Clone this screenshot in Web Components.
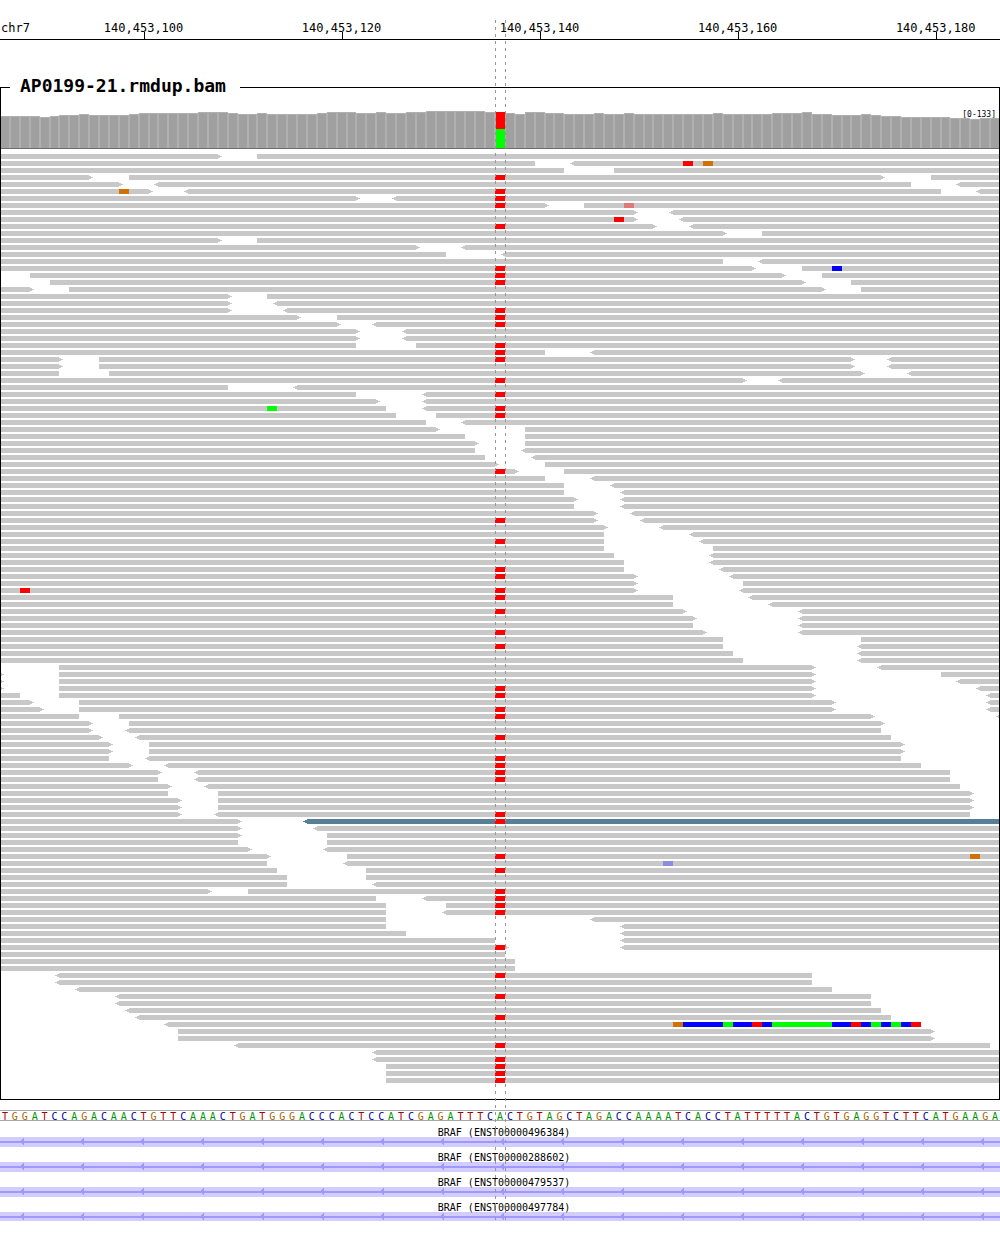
<!DOCTYPE html>
<html lang="en">
<head>
<meta charset="utf-8">
<title>AP0199-21.rmdup.bam chr7</title>
<style>
body { margin: 0; background: #fff; color: #000; font-family: "DejaVu Sans Mono", monospace; }
</style>
</head>
<body>
<genome-view>
  <genome-ruler chrom="chr7" first="140453086" step="20"></genome-ruler>
  <alignment-track>
    <span slot="title">AP0199-21.rmdup.bam</span>
    <coverage-plot slot="coverage" range="[0-133]"></coverage-plot>
    <read-pileup></read-pileup>
  </alignment-track>
  <base-sequence>TGGATCCAGACAACTGTTCAAACTGATGGGACCCACTCCATCGAGATTTCACTGTAGCTAGACCAAAATCACCTATTTTTACTGTGAGGTCTTCATGAAGA</base-sequence>
  <gene-list>
    <gene-track>BRAF (ENST00000496384)</gene-track>
    <gene-track>BRAF (ENST00000288602)</gene-track>
    <gene-track>BRAF (ENST00000479537)</gene-track>
    <gene-track>BRAF (ENST00000497784)</gene-track>
  </gene-list>
</genome-view>
<script>
const BASES = 101;
const pct = i => (i * 100 / BASES) + '%';
const rect = (from, to, y, h, fill) =>
  `<rect x="${pct(from)}" y="${y}" width="${pct(to - from)}" height="${h}" fill="${fill}"/>`;

/* One line per pileup row. "a-b" is a read over bases a..b, "<" and ">" mark
   its strand arrow, "*" a read with an unusual mate. Letters mark mismatches. */
const ROWS = `0-22> 26-101
0-54 <58-101 R69 O71
0-57 62-101
0-9> 13-89> 94-101 R50
0-12> <16-92 <97-101
0-15> <19-95 <99-101 O12 R50
0-36> <40-101 R50
0-55> 59-101 R50 r63
0-64> <68-101
0-64> <69-101 R62
0-66> <70-101 R50
0-73> 77-101
0-22> 26-101
0-42> <47-101
0-45 <51-101
0-73 <77-101
0-76> 81-101 R50 B84
3-79> 83-101 R50
5-81> 86-101 R50
0-3> 7-83> 87-101
0-23> 27-101
0-23> <28-101
0-23> <29-101 R50
0-30> 34-101 R50
0-34> <38-101 R50
0-36> <41-101
0-36> <41-101
0-36 42-101 R50
0-55 <60-101 R50
0-6> 10-86> <90-101 R50
0-6> 10-86> <90-101
0-6 11-87> <92-101
0-75> <79-101 R50
0-23 <30-101
0-36 <43-101 R50
0-38> <43-101
0-39 <43-101 G27 R50
0-40 44-101 R50
0-43 <47-101
0-44> 53-101
0-47 53-101
0-48> 53-101
0-48 <53-101
0-49 <54-101
0-50> 55-101
0-52> 57-101 R50
0-55 <60-101
0-57 <62-101
0-57 <63-101
0-58> <63-101
0-58 <63-101
0-60> <64-101
0-60> <65-101 R50
0-61> <67-101
0-61 <70-101
0-61 <71-101 R50
0-61 72-101
0-62 <72-101
0-63 <72-101
0-63 <73-101 R50
0-64> <74-101 R50
0-64> 75-101
0-64> <75-101 R2 R50
0-68 <76-101 R50
0-68 <78-101
0-69> <81-101 R50
0-70> <81-101
0-70 <81-101
0-71> <81-101 R50
0-73 87-101
0-73 <87-101 R50
0-74 <87-101
0-75 <87-101
6-82> <89-101
0-0> 6-82> 95-101
0-0> 6-82> <97-101
0-0> 6-82> <99-101 R50
0-2 6-82> <100-101 R50
0-3> 8-84> <100-101
0-4> 8-84> <100-101 R50
0-8 12-88> <101-101 R50
0-9> 13-89>
0-9> <13-89
0-10> <14-90 R50
0-11> 15-91>
0-11> 15-91>
0-11 <15-91 R50
0-13> <17-93 R50
0-16> <20-96 R50
0-16 <20-96 R50
0-17> <21-97
0-17 22-98>
0-18> 22-98>
0-18> 22-98>
0-18> <22-98 R50
0-24> *<31-101 R50
0-24> <32-101
0-24> 33-101
0-24 33-101
0-25> <33-101
0-27> 35-101 R50 O98
0-27 <35-101 b67
0-28 37-101 R50
0-29 37-101
0-29 <38-101
0-21> 25-101 R50
0-38 <43-101 R50
0-39 45-101 R50
0-39 <45-101 R50
0-39 <60-101
0-39 <63-101
0-41 <63-101
0-50 <63-101
0-51> <63-101 R50
0-51
0-52
0-52
<6-82 R50
<6-82
<8-84
<12-88 R50
<12-88
<13-89
<14-90 R50
<17-68 O68 B69-73 G73 B74-76 R76 B77 G78-84 B84-86 R86 B87 G88 B89 G90 B91 R92
18-94>
18-94>
<24-100 R50
<38-101
<38-101 R50
39-101 R50
39-101 R50
39-101 R50`.split('\n');

const MISMATCH = { R: '#f00', G: '#0f0', B: '#00f', O: '#d17105', r: '#e07878', b: '#8c8cdc' };

/* Top of each coverage bar, as [number of bases, y of the top]. */
const COVERAGE = [[4,18],[1,19],[1,18],[2,17],[1,16],[4,17],[1,16],[6,15],[3,14],[1,15],[2,16],[1,15],
  [5,16],[1,15],[3,14],[2,15],[1,14],[2,15],[2,14],[6,13],[1,14],[1,14],[1,15],[1,16],[2,14],[2,15],
  [3,16],[1,15],[2,16],[1,15],[8,16],[1,15],[5,16],[3,15],[1,14],[2,16],[3,17],[1,16],[1,17],[2,18],
  [5,19],[2,20],[1,21],[2,20]];

class ViewElement extends HTMLElement {
  connectedCallback() {
    if (!this.shadowRoot) this.attachShadow({ mode: 'open' }).innerHTML = this.render();
  }
}

customElements.define('genome-view', class extends ViewElement {
  render() {
    return `<style>
      :host { display: flex; flex-direction: column; position: relative; overflow: hidden; }
      i { position: absolute; top: 20px; bottom: 0; width: 1px;
          background: repeating-linear-gradient(#969696 0 3px, transparent 3px 7px); }
      .from { left: calc(100% * 50 / ${BASES}); }
      .to { left: calc(100% * 51 / ${BASES}); }
    </style><slot></slot><i class="from"></i><i class="to"></i>`;
  }
});

customElements.define('genome-ruler', class extends ViewElement {
  render() {
    const first = Number(this.getAttribute('first'));
    const step = Number(this.getAttribute('step'));
    let marks = '';
    for (let i = 14; i < BASES; i += step) {
      const x = pct(i + 0.5);
      marks += `<text x="${x}" y="32" text-anchor="middle">${(first + i).toLocaleString('en-US')}</text>
        <svg x="${x}" overflow="visible"><rect y="32" width="1" height="8" shape-rendering="crispEdges"/></svg>`;
    }
    return `<style>
      :host { display: block; }
      svg { display: block; width: 100%; height: 39px; }
      .axis { border-bottom: 1px solid #000; }
      text { font-size: 12px; }
    </style><div class="axis"><svg><text x="1" y="32">${this.getAttribute('chrom')}</text>${marks}</svg></div>`;
  }
});

customElements.define('alignment-track', class extends ViewElement {
  render() {
    return `<style>
      :host { display: flex; flex-direction: column; align-items: stretch; position: relative;
              margin-top: 35px; padding-bottom: 15px; }
      :host::after { content: ""; position: absolute; inset: 12px 0 0; border: 1px solid #000; pointer-events: none; }
      h2 { align-self: flex-start; position: relative; z-index: 1; margin: 0 0 1px 10px; padding: 0 14px 0 10px;
           background: #fff; font-size: 18px; line-height: 22px; font-weight: bold; }
    </style><h2><slot name="title"></slot></h2><slot name="coverage"></slot><slot></slot>`;
  }
});

customElements.define('coverage-plot', class extends ViewElement {
  render() {
    const edge = (i, offset, top) =>
      `<svg x="${pct(i)}" overflow="visible"><rect x="${offset}" y="${top}" width="1" height="${50 - top}" fill="#b0b0b0"/></svg>`;
    let bars = '', i = 0;
    for (const [count, top] of COVERAGE) {
      for (let n = 0; n < count; n++, i++) {
        if (i === 50) {
          bars += rect(i, i + 1, top, 17, '#f00') + rect(i, i + 1, top + 17, 50 - top - 17, '#0f0') + edge(i, 0, top);
          continue;
        }
        bars += rect(i, i + 1, top, 50 - top, '#a0a0a0') + rect(i, i + 1, top, 1, '#b0b0b0')
          + edge(i, 0, top) + edge(i + 1, -1, top);
      }
    }
    return `<style>
      :host { display: block; position: relative; }
      svg { display: block; width: 100%; height: 50px; shape-rendering: crispEdges; }
      .plot { border-bottom: 1px solid #6e6e6e; }
      span { position: absolute; top: 12px; right: 4px; font-size: 8px; line-height: 10px; }
    </style><div class="plot"><svg>${bars}</svg></div><span>${this.getAttribute('range')}</span>`;
  }
});

customElements.define('read-pileup', class extends ViewElement {
  arrow(at, y, side, fill) {
    return `<svg x="${pct(at)}" y="${y}" overflow="visible" fill="${fill}">
      <rect x="${side < 0 ? -2 : 0}" y="1" width="2" height="3"/>
      <rect x="${side < 0 ? -4 : 2}" y="2" width="2" height="1"/></svg>`;
  }
  row(line, n) {
    const y = n * 7;
    let out = '';
    for (const token of line.split(' ')) {
      const mark = token.match(/^([RGBOrb])(\d+)(?:-(\d+))?$/);
      if (mark) {
        const from = Number(mark[2]);
        out += rect(from, mark[3] ? Number(mark[3]) : from + 1, y, 5, MISMATCH[mark[1]]);
        continue;
      }
      const [, odd, left, from, to, right] = token.match(/^(\*?)(<?)(\d+)-(\d+)(>?)$/);
      const fill = odd ? '#587f98' : '#c8c8c8';
      out += rect(Number(from), Number(to), y, 5, fill);
      if (left) out += this.arrow(Number(from), y, -1, fill);
      if (right) out += this.arrow(Number(to), y, 1, fill);
    }
    return out;
  }
  render() {
    return `<style>
      :host { display: block; padding-top: 5px; }
      svg { display: block; width: 100%; shape-rendering: crispEdges; }
    </style><svg height="${ROWS.length * 7}">${ROWS.map((line, n) => this.row(line, n)).join('')}</svg>`;
  }
});

customElements.define('base-sequence', class extends ViewElement {
  render() {
    const letters = [...this.textContent.trim()].map((b, i) =>
      `<text class="${b}" x="${pct(i + 0.5)}" y="9" text-anchor="middle">${b}</text>`).join('');
    return `<style>
      :host { display: block; margin-top: 10px; border: solid #a8a8a8; border-width: 1px 0; }
      svg { display: block; width: 100%; height: 9px; overflow: visible; font-size: 10px; }
      .A { fill: #009600; } .C { fill: #000096; } .G { fill: #a56400; } .T { fill: #a50000; }
    </style><svg>${letters}</svg>`;
  }
});

customElements.define('gene-list', class extends ViewElement {
  render() {
    return `<style>
      :host { display: flex; flex-direction: column; height: 99px; margin-top: 1px; overflow: hidden; }
    </style><slot></slot>`;
  }
});

customElements.define('gene-track', class extends ViewElement {
  render() {
    return `<style>
      :host { display: block; flex: none; }
      .name { padding: 4px 0 0 8px; text-align: center; font-size: 10px; line-height: 13px; height: 15px; box-sizing: border-box; }
      svg { display: block; width: 100%; height: 10px; background: #d2ccff; shape-rendering: crispEdges; }
    </style><div class="name"><slot></slot></div>
    <svg><defs><pattern id="strand" width="60" height="10" patternUnits="userSpaceOnUse">
      <path d="M24 1v7h-1v-1h-1v-1h-1v-3h1v-1h1v-1z" fill="#9f99ff"/></pattern></defs>
      <rect width="100%" height="10" fill="url(#strand)"/>
      <rect y="4" width="100%" height="2" fill="#9f99ff"/></svg>`;
  }
});
</script>
</body>
</html>
